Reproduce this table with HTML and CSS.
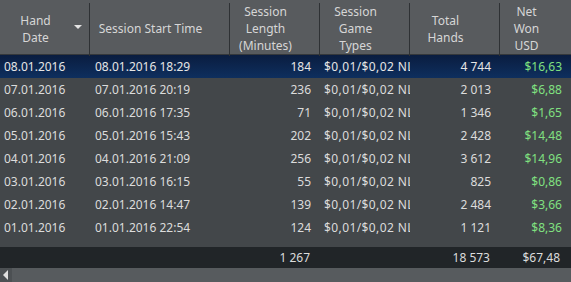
FILE: index.html
```html
<!DOCTYPE html>
<html>
<head>
<meta charset="utf-8">
<link rel="stylesheet" href="styles.css">
</head>
<body>
<div class="grid">
  <div class="head">
    <div class="hc hc-date"><span>Hand<br>Date</span><span class="arrow"></span></div>
    <div class="hc"><span>Session Start Time</span></div>
    <div class="hc"><span>Session<br>Length<br>(Minutes)</span></div>
    <div class="hc"><span>Session<br>Game<br>Types</span></div>
    <div class="hc"><span>Total<br>Hands</span></div>
    <div class="hc last"><span>Net<br>Won<br>USD</span></div>
  </div>
  <div class="body">
    <div class="row sel"><div class="c l">08.01.2016</div><div class="c l2">08.01.2016 18:29</div><div class="c r">184</div><div class="c g">$0,01/$0,02 NL</div><div class="c r">4 744</div><div class="c r win">$16,63</div></div>
    <div class="row"><div class="c l">07.01.2016</div><div class="c l2">07.01.2016 20:19</div><div class="c r">236</div><div class="c g">$0,01/$0,02 NL</div><div class="c r">2 013</div><div class="c r win">$6,88</div></div>
    <div class="row"><div class="c l">06.01.2016</div><div class="c l2">06.01.2016 17:35</div><div class="c r">71</div><div class="c g">$0,01/$0,02 NL</div><div class="c r">1 346</div><div class="c r win">$1,65</div></div>
    <div class="row"><div class="c l">05.01.2016</div><div class="c l2">05.01.2016 15:43</div><div class="c r">202</div><div class="c g">$0,01/$0,02 NL</div><div class="c r">2 428</div><div class="c r win">$14,48</div></div>
    <div class="row"><div class="c l">04.01.2016</div><div class="c l2">04.01.2016 21:09</div><div class="c r">256</div><div class="c g">$0,01/$0,02 NL</div><div class="c r">3 612</div><div class="c r win">$14,96</div></div>
    <div class="row"><div class="c l">03.01.2016</div><div class="c l2">03.01.2016 16:15</div><div class="c r">55</div><div class="c g">$0,01/$0,02 NL</div><div class="c r">825</div><div class="c r win">$0,86</div></div>
    <div class="row"><div class="c l">02.01.2016</div><div class="c l2">02.01.2016 14:47</div><div class="c r">139</div><div class="c g">$0,01/$0,02 NL</div><div class="c r">2 484</div><div class="c r win">$3,66</div></div>
    <div class="row"><div class="c l">01.01.2016</div><div class="c l2">01.01.2016 22:54</div><div class="c r">124</div><div class="c g">$0,01/$0,02 NL</div><div class="c r">1 121</div><div class="c r win">$8,36</div></div>
  </div>
  <div class="row foot"><div class="c"></div><div class="c"></div><div class="c r">1 267</div><div class="c"></div><div class="c r">18 573</div><div class="c r">$67,48</div></div>
  <div class="scroll"><div class="sbtn"><span class="larrow"></span></div><div class="strack"></div></div>
</div>
</body>
</html>
```
FILE: styles.css
```css
html, body {
  margin: 0;
  padding: 0;
  width: 571px;
  height: 282px;
  overflow: hidden;
  background: #43474a;
  font-family: "Noto Sans", "Open Sans", sans-serif;
  font-size: 12px;
  color: #dcdcdc;
}
.grid {
  display: flex;
  flex-direction: column;
  height: 282px;
}
.head, .row {
  display: grid;
  grid-template-columns: 90px 140px 90px 90px 90px 71px;
}
.head {
  height: 55px;
  background: #585b5e;
  border-bottom: 1px solid #35383b;
  box-sizing: border-box;
  color: #d6d6d6;
}
.hc {
  display: flex;
  align-items: center;
  justify-content: center;
  text-align: center;
  line-height: 17px;
  position: relative;
  margin: 3px 0 2px;
  border-right: 1px solid #2e3134;
  padding: 0 18px 2px 0;
}
.hc.last { border-right: none; }
.arrow {
  position: absolute;
  left: 74px;
  top: 22px;
  width: 0;
  height: 0;
  border-left: 4px solid transparent;
  border-right: 4px solid transparent;
  border-top: 4px solid #e4e4e4;
}
.body {
  flex: 1;
  display: flex;
  flex-direction: column;
}
.row {
  height: 23px;
  align-items: center;
  white-space: nowrap;
}
.c {
  overflow: hidden;
  line-height: 23px;
}
.l { padding-left: 4px; }
.l2 { padding-left: 5px; }
.g { padding-left: 4px; letter-spacing: 0.4px; }
.r { text-align: right; padding-right: 9px; }
.win { color: #80e080; }
.sel {
  background: linear-gradient(#0a1d40, #0e2f5e);
  color: #e6e6e6;
}
.foot {
  height: 21px;
  background: #212528;
}
.foot .c { line-height: 21px; }
.foot .r { padding-right: 10px; }
.foot .c:last-child { padding-right: 11px; }
.scroll {
  height: 14px;
  display: flex;
  background: #575b5e;
}
.sbtn {
  width: 12px;
  background: #4c5053;
  display: flex;
  align-items: center;
  padding-left: 3px;
  box-sizing: border-box;
}
.larrow {
  width: 0;
  height: 0;
  border-top: 5px solid transparent;
  border-bottom: 5px solid transparent;
  border-right: 5px solid #e0e0e0;
}
.strack { flex: 1; }
```
